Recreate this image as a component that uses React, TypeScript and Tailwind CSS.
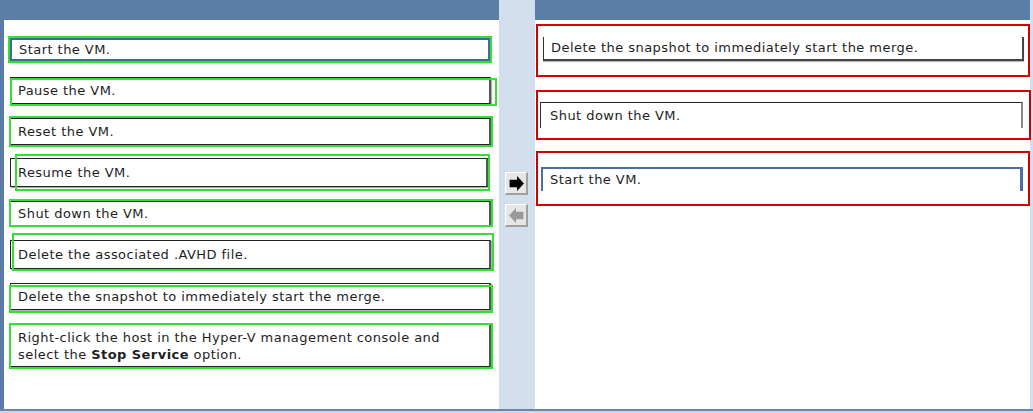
import React from "react";

type LeftItem = {
  text: React.ReactNode;
  box: string;
  green: string;
  selected?: boolean;
};

const leftItems: LeftItem[] = [
  {
    text: "Start the VM.",
    box: "mt-[18px] h-[23px] w-[480px]",
    green: "-top-[2px] -left-[2px] -right-[2px] -bottom-[2px]",
    selected: true,
  },
  {
    text: "Pause the VM.",
    box: "mt-[16px] h-[27px] w-[481px]",
    green: "top-[1px] left-0 -right-[6px] -bottom-[2px]",
  },
  {
    text: "Reset the VM.",
    box: "mt-[14px] h-[27px] w-[481px]",
    green: "-top-[2px] -left-[1px] -right-[2px] -bottom-[2px]",
  },
  {
    text: "Resume the VM.",
    box: "mt-[13px] h-[29px] w-[478px]",
    green: "-top-[4px] left-[5px] -right-[2px] -bottom-[4px]",
  },
  {
    text: "Shut down the VM.",
    box: "mt-[14px] h-[25px] w-[481px]",
    green: "-top-[2px] -left-[1px] -right-[2px] -bottom-[1px]",
  },
  {
    text: "Delete the associated .AVHD file.",
    box: "mt-[14px] h-[29px] w-[481px]",
    green: "-top-[7px] left-[2px] -right-[3px] -bottom-[2px]",
  },
  {
    text: "Delete the snapshot to immediately start the merge.",
    box: "mt-[14px] h-[27px] w-[481px]",
    green: "top-[2px] -left-[1px] -right-[2px] -bottom-[3px]",
  },
  {
    text: (
      <>
        Right-click the host in the Hyper-V management console and
        <br />
        select the <b>Stop Service</b> option.
      </>
    ),
    box: "mt-[14px] h-[43px] w-[481px]",
    green: "-top-[1px] -left-[1px] -right-[2px] -bottom-[2px]",
  },
];

function ArrowButton({ dir }: { dir: "right" | "left" }) {
  const active = dir === "right";
  return (
    <div className="w-[23px] h-[23px] bg-[#e6e6e6] border-t border-l border-t-[#ffffff] border-l-[#ffffff] border-b-2 border-r-2 border-b-[#a0a0a0] border-r-[#a0a0a0] flex items-center justify-center">
      <svg width="17" height="17" viewBox="0 0 16 16" className="block shrink-0">
        {active ? (
          <path d="M1.5 4.5h7V1L15 8l-6.5 7v-3.5h-7z" fill="#000" />
        ) : (
          <path d="M14.5 4.5h-7V1L1 8l6.5 7v-3.5h7z" fill="#9a9a9a" />
        )}
      </svg>
    </div>
  );
}

export default function App() {
  return (
    <div
      className="w-[1033px] h-[413px] flex flex-col bg-[#d3dfec] text-[13px] tracking-[0.45px] text-[#1e1e1e] overflow-hidden"
      style={{ fontFamily: '"DejaVu Sans", Verdana, sans-serif' }}
    >
      <div className="flex h-[409px]">
        {/* Left list */}
        <div className="w-[499px] flex flex-col">
          <div className="h-[20px] bg-[#5b7ea7]" />
          <div className="flex-1 bg-white border-l-4 border-[#5a7ca6] flex flex-col pl-[6px]">
            {leftItems.map((item, i) => (
              <div key={i} className={`relative ${item.box}`}>
                <div
                  className={`h-full w-full bg-white flex items-center pl-[7px] leading-[17px] ${
                    item.selected
                      ? "border-2 border-[#3f6a9c] shadow-[1px_2px_2px_#9a9a9a]"
                      : "border border-[#222] border-r-2 border-r-[#555] shadow-[1px_1px_1px_#b0b0b0]"
                  }`}
                >
                  <span>{item.text}</span>
                </div>
                <div
                  className={`absolute pointer-events-none border-2 border-[#33e033] ${item.green}`}
                />
              </div>
            ))}
          </div>
        </div>

        {/* Middle buttons */}
        <div className="w-[36px] flex flex-col pt-[172px] pl-[6px] gap-[9px]">
          <ArrowButton dir="right" />
          <ArrowButton dir="left" />
        </div>

        {/* Right targets */}
        <div className="w-[495px] flex flex-col">
          <div className="h-[20px] bg-[#5b7ea7]" />
          <div className="flex-1 bg-white flex flex-col pl-[1px]">
            <div className="mt-[4px] h-[53px] w-[494px] border-2 border-[#d40000] pt-[11px] pl-[5px] pr-[4px]">
              <div className="h-[24px] border-l border-r-2 border-b-2 border-l-[#333] border-r-[#444] border-b-[#444] flex items-center pl-[7px] shadow-[0_1px_1px_#bbb]">
                Delete the snapshot to immediately start the merge.
              </div>
            </div>
            <div className="mt-[13px] h-[50px] w-[495px] border-2 border-[#d40000] pt-[10px] pl-[2px] pr-[6px]">
              <div className="h-[26px] border-t border-l border-r-2 border-t-[#222] border-l-[#333] border-r-[#888] flex items-center pl-[9px]">
                Shut down the VM.
              </div>
            </div>
            <div className="mt-[11px] h-[55px] w-[494px] border-2 border-[#d40000] pt-[14px] pl-[3px] pr-[5px]">
              <div className="h-[24px] border-t-2 border-l-2 border-r-[3px] border-[#4a6ea5] flex items-center pl-[7px]">
                Start the VM.
              </div>
            </div>
          </div>
        </div>
        <div className="flex-1" />
      </div>
      <div className="h-[2px] bg-[#6b86ab]" />
      <div className="flex-1 bg-[#ccd8e7]" />
    </div>
  );
}
